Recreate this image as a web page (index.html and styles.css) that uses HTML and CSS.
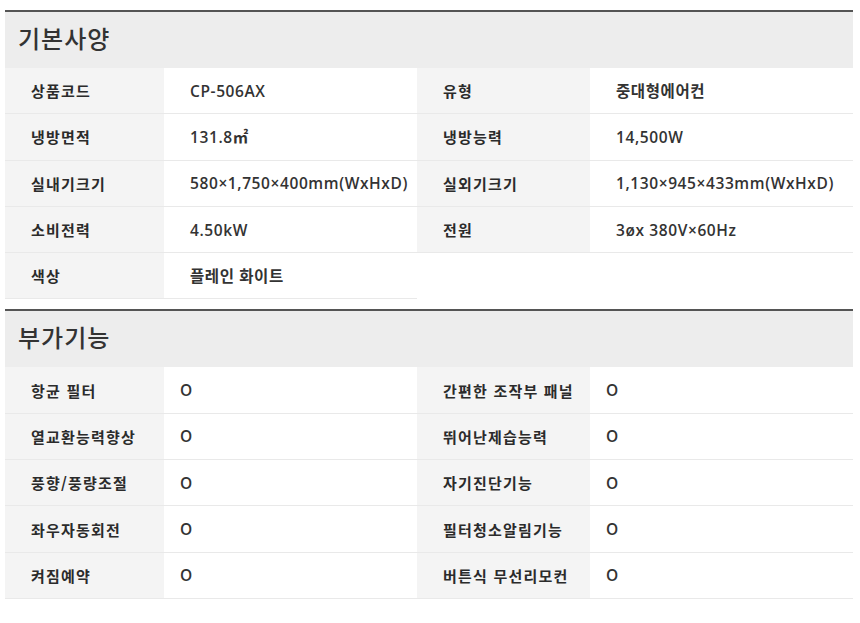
FILE: index.html
```html
<!DOCTYPE html>
<html lang="ko">
<head>
<meta charset="utf-8">
<link rel="stylesheet" href="styles.css">
</head>
<body>
<div class="page">
  <section class="spec">
    <h2 class="spec-title">기본사양</h2>
    <div class="grid">
      <div class="lab">상품코드</div><div class="val">CP-506AX</div>
      <div class="lab">유형</div><div class="val">중대형에어컨</div>
      <div class="lab">냉방면적</div><div class="val">131.8㎡</div>
      <div class="lab">냉방능력</div><div class="val">14,500W</div>
      <div class="lab">실내기크기</div><div class="val">580×1,750×400mm(WxHxD)</div>
      <div class="lab">실외기크기</div><div class="val">1,130×945×433mm(WxHxD)</div>
      <div class="lab">소비전력</div><div class="val">4.50kW</div>
      <div class="lab">전원</div><div class="val">3øx 380V×60Hz</div>
      <div class="lab">색상</div><div class="val">플레인 화이트</div>
    </div>
  </section>
  <section class="spec second">
    <h2 class="spec-title">부가기능</h2>
    <div class="grid">
      <div class="lab">항균 필터</div><div class="val">O</div>
      <div class="lab">간편한 조작부 패널</div><div class="val">O</div>
      <div class="lab">열교환능력향상</div><div class="val">O</div>
      <div class="lab">뛰어난제습능력</div><div class="val">O</div>
      <div class="lab">풍향/풍량조절</div><div class="val">O</div>
      <div class="lab">자기진단기능</div><div class="val">O</div>
      <div class="lab">좌우자동회전</div><div class="val">O</div>
      <div class="lab">필터청소알림기능</div><div class="val">O</div>
      <div class="lab">켜짐예약</div><div class="val">O</div>
      <div class="lab">버튼식 무선리모컨</div><div class="val">O</div>
    </div>
  </section>
</div>
</body>
</html>
```
FILE: styles.css
```css
html, body {
  margin: 0;
  padding: 0;
  background: #fff;
}
body {
  font-family: "Noto Sans CJK KR", "Noto Sans", sans-serif;
  color: #333;
}
.page {
  width: 848px;
  padding: 10px 0 0 5px;
}
.spec {
  border-top: 2px solid #555;
}
.spec.second {
  margin-top: 10px;
}
.spec-title {
  margin: 0;
  height: 56px;
  background: #ededed;
  display: flex;
  align-items: center;
  padding: 0 0 6px 13px;
  box-sizing: border-box;
  font-size: 24px;
  font-weight: 500;
  color: #333;
  letter-spacing: 1px;
}
.grid {
  display: grid;
  grid-template-columns: 159px 253px 173px 263px;
  grid-auto-rows: 46.3px;
}
.lab, .val {
  display: flex;
  align-items: center;
  border-bottom: 1px solid #e9e9e9;
  box-sizing: border-box;
  font-size: 15px;
  white-space: nowrap;
}
.lab {
  background: #f4f4f4;
  font-weight: 700;
  color: #2b2b2b;
  padding-left: 26px;
  letter-spacing: 1.2px;
}
.val {
  background: #fff;
  font-family: "Open Sans", "Noto Sans CJK KR", sans-serif;
  font-size: 15.5px;
  font-weight: 600;
  color: #333;
  padding-left: 26px;
  letter-spacing: 0.6px;
}
.second .val {
  padding-left: 16px;
}
```
